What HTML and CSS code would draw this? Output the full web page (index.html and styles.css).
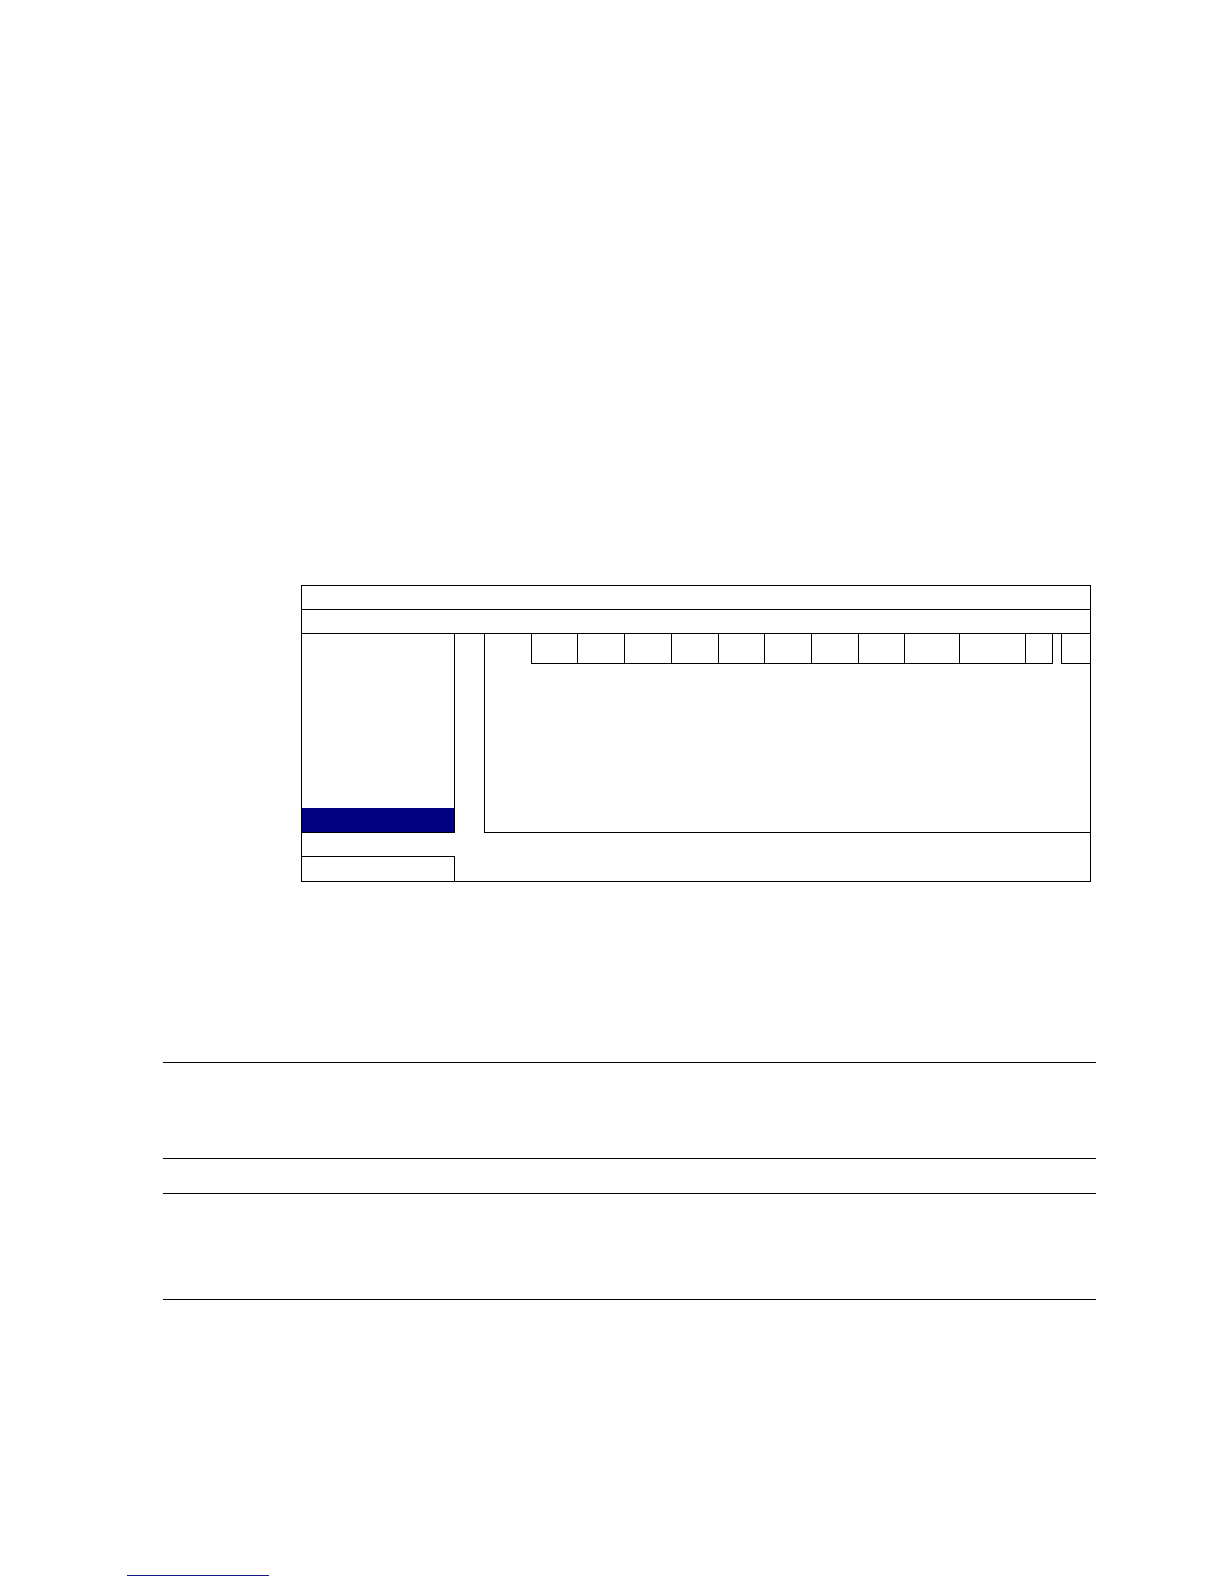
FILE: index.html
```html
<!DOCTYPE html>
<html lang="en">
<head>
<meta charset="utf-8">
<title>Menu layout</title>
<link rel="stylesheet" href="styles.css">
</head>
<body>
<div class="page">
  <div class="dialog">
    <div class="title-row"></div>
    <div class="sub-row"></div>
    <div class="main">
      <div class="menu">
        <div class="menu-item active"></div>
      </div>
      <div class="content">
        <div class="header">
          <div class="cell w46"></div>
          <div class="cell w47"></div>
          <div class="cell w47"></div>
          <div class="cell w47"></div>
          <div class="cell w46"></div>
          <div class="cell w47"></div>
          <div class="cell w47"></div>
          <div class="cell w46"></div>
          <div class="cell w55"></div>
          <div class="cell w66"></div>
          <div class="cell w28 closed"></div>
          <div class="cell last"></div>
        </div>
      </div>
    </div>
    <div class="footer">
      <div class="footer-box"></div>
    </div>
  </div>

  <div class="rules">
    <div class="rule r1"></div>
    <div class="rule r2"></div>
    <div class="rule r3"></div>
  </div>

  <div class="footnote-line"></div>
</div>
</body>
</html>
```

FILE: styles.css
```css
html, body {
  margin: 0;
  padding: 0;
  background: #ffffff;
  font-family: "Liberation Sans", Arial, sans-serif;
}

.page {
  width: 1224px;
  height: 1584px;
  padding-top: 585px;
  box-sizing: border-box;
}

.dialog {
  margin-left: 301px;
  width: 790px;
  box-sizing: border-box;
  border: 1px solid #000;
}

.title-row {
  height: 24px;
  box-sizing: border-box;
  border-bottom: 1px solid #000;
}

.sub-row {
  height: 24px;
  box-sizing: border-box;
  border-bottom: 1px solid #000;
}

.main {
  display: flex;
  height: 199px;
  gap: 29px;
}

.menu {
  width: 153px;
  box-sizing: border-box;
  border-right: 1px solid #000;
  border-bottom: 1px solid #000;
  display: flex;
  flex-direction: column;
  justify-content: flex-end;
}

.menu-item {
  height: 24px;
}

.menu-item.active {
  background: #000080;
}

.content {
  flex: 1;
  box-sizing: border-box;
  border-left: 1px solid #000;
  border-bottom: 1px solid #000;
}

.header {
  display: flex;
  margin-left: 46px;
  height: 30px;
}

.cell {
  box-sizing: border-box;
  height: 30px;
  border-left: 1px solid #000;
  border-bottom: 1px solid #000;
}

.w46 { width: 46px; }
.w47 { width: 47px; }
.w55 { width: 55px; }
.w66 { width: 66px; }
.w28 { width: 28px; }

.cell.closed {
  border-right: 1px solid #000;
  margin-right: 8px;
}

.cell.last {
  flex: 1;
}

.footer {
  height: 48px;
  padding-top: 23px;
  box-sizing: border-box;
}

.footer-box {
  width: 153px;
  height: 25px;
  box-sizing: border-box;
  border-top: 1px solid #000;
  border-right: 1px solid #000;
}

.rules {
  margin-top: 180px;
  margin-left: 163px;
  width: 933px;
  border-bottom: 1px solid #000;
}

.rule {
  border-top: 1px solid #000;
  box-sizing: border-box;
}

.r1 { height: 96px; }
.r2 { height: 35px; }
.r3 { height: 106px; }

.footnote-line {
  margin-top: 275px;
  margin-left: 127px;
  width: 142px;
  border-top: 1px solid #1a1a8c;
}
```
